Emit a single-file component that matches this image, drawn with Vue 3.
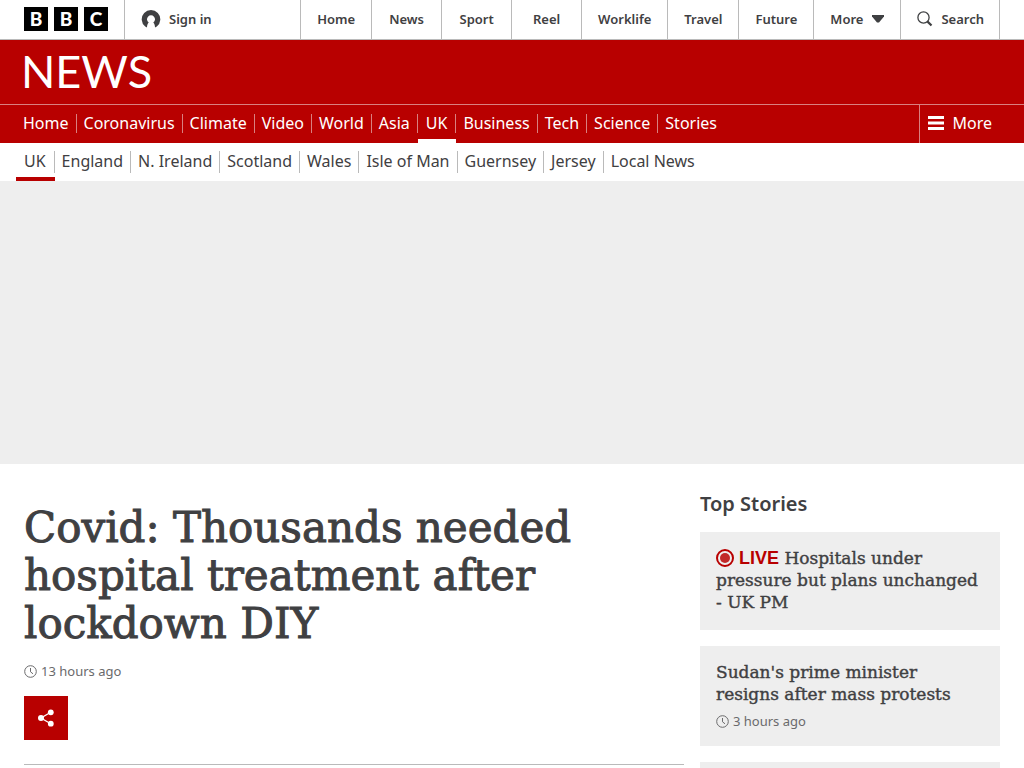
<script setup>
const services = ['Home', 'News', 'Sport', 'Reel', 'Worklife', 'Travel', 'Future']
const sections = ['Home', 'Coronavirus', 'Climate', 'Video', 'World', 'Asia', 'UK', 'Business', 'Tech', 'Science', 'Stories']
const regions = ['UK', 'England', 'N. Ireland', 'Scotland', 'Wales', 'Isle of Man', 'Guernsey', 'Jersey', 'Local News']
</script>

<template>
  <div class="page">
    <header>
      <div class="topbar">
        <a class="blocks" href="#" aria-label="BBC"><span>B</span><span>B</span><span>C</span></a>
        <a class="signin" href="#">
          <svg width="20" height="20" viewBox="0 0 20 20" aria-hidden="true">
            <path fill="#3f4042" d="M4.200 17.600 A9.300 9.300 0 1 1 15.800 17.600 L14 18.600 C14 16.500 13.500 15 12.300 13.600 A4 4 0 1 0 7.700 13.600 C6.500 15 6 16.500 6 18.600Z" />
          </svg>
          <span>Sign in</span>
        </a>
        <nav class="services" aria-label="BBC">
          <a v-for="name in services" :key="name" href="#">{{ name }}</a>
          <button type="button" class="more">
            More
            <svg width="12" height="8" viewBox="0 0 12 8" aria-hidden="true"><path fill="#3f4042" d="M0 0H12V1.500L7 7.500H5L0 1.500Z" /></svg>
          </button>
          <a class="search" href="#">
            <svg width="16" height="16" viewBox="0 0 16 16" fill="none" stroke="#3f4042" aria-hidden="true">
              <circle cx="6.500" cy="6.500" r="5.600" stroke-width="1.300" /><path d="M10.600 10.600L14.500 14.500" stroke-width="2.200" />
            </svg>
            Search
          </a>
        </nav>
      </div>
      <div class="brand"><a href="#">NEWS</a></div>
      <div class="sections">
        <nav class="tabs" aria-label="News">
          <a v-for="name in sections" :key="name" href="#" :class="{ current: name === 'UK' }"><span>{{ name }}</span></a>
        </nav>
        <button type="button" class="menu">
          <svg width="16" height="14" viewBox="0 0 16 14" aria-hidden="true"><path fill="#fff" d="M0 0H16V3H0ZM0 5.500H16V8.500H0ZM0 11H16V14H0Z" /></svg>
          More
        </button>
      </div>
      <nav class="tabs regions" aria-label="UK">
        <a v-for="name in regions" :key="name" href="#" :class="{ current: name === 'UK' }"><span>{{ name }}</span></a>
      </nav>
    </header>
    <div class="banner"></div>
    <main>
      <article>
        <h1>Covid: Thousands needed hospital treatment after lockdown DIY</h1>
        <p class="time">
          <svg width="13" height="13" viewBox="0 0 13 13" fill="none" stroke="#6a6a6c" aria-hidden="true"><circle cx="6.500" cy="6.500" r="5.800" /><path d="M6.500 3V6.800L9 8.800" /></svg>
          13 hours ago
        </p>
        <button type="button" class="share" aria-label="Share">
          <svg width="16" height="18" viewBox="0 0 16 18" aria-hidden="true">
            <path d="M12.700 3.300L3 9L12.700 14.700" fill="none" stroke="#fff" stroke-width="1.300" />
            <g fill="#fff"><circle cx="12.800" cy="3.300" r="2.900" /><circle cx="3" cy="9" r="3" /><circle cx="12.800" cy="14.700" r="2.900" /></g>
          </svg>
        </button>
      </article>
      <aside>
        <h2>Top Stories</h2>
        <a class="card" href="#">
          <h3>
            <svg class="pulse" width="18" height="18" viewBox="0 0 18 18" aria-hidden="true"><circle cx="9" cy="9" r="8" fill="none" stroke="#b80000" stroke-width="2" /><circle cx="9" cy="9" r="5" fill="#c22a2a" /></svg>
            <span class="live">LIVE</span> Hospitals under pressure but plans unchanged - UK PM
          </h3>
        </a>
        <a class="card" href="#">
          <h3>Sudan's prime minister resigns after mass protests</h3>
          <p class="time">
            <svg width="13" height="13" viewBox="0 0 13 13" fill="none" stroke="#6a6a6c" aria-hidden="true"><circle cx="6.500" cy="6.500" r="5.800" /><path d="M6.500 3V6.800L9 8.800" /></svg>
            3 hours ago
          </p>
        </a>
        <div class="card"></div>
      </aside>
    </main>
  </div>
</template>

<style>
body { margin: 0; background: #fff; }
</style>

<style scoped>
.page { height: 100vh; overflow: hidden; color: #3f4042; font-family: "Noto Sans", sans-serif; }
.page * { box-sizing: border-box; }
a { color: inherit; text-decoration: none; }
button { border: 0; background: none; color: inherit; font: inherit; padding: 0; margin: 0; }
h1, h2, h3, p { margin: 0; }
svg { flex: none; }
.topbar { display: flex; height: 40px; padding: 0 24px; border-bottom: 1px solid #bababa; font-size: 13px; line-height: 16px; font-weight: 600; }
.blocks { display: flex; gap: 6px; padding: 7px 16px 0 0; border-right: 1px solid #bababa; }
.blocks span { width: 24px; height: 24px; background: #000; color: #fff; text-align: center; font: 900 19px/24px Lato, sans-serif; }
.signin { flex: 1; display: flex; align-items: center; gap: 8px; padding: 0 0 1px 16px; }
.services { display: flex; border-left: 1px solid #bababa; }
.services > * { display: flex; align-items: center; justify-content: center; min-width: 70px; padding: 0 16px 1px; border-right: 1px solid #bababa; }
.services .more { gap: 9px; }
.services .search { gap: 8px; }
.services .search { padding-right: 15px; }
.brand { height: 64px; padding-left: 21px; background: #b80000; color: #fff; font: 400 45px/62px Lato, sans-serif; }
.sections { display: flex; justify-content: space-between; height: 39px; padding: 0 24px 0 16px; background: #b80000; color: #fff; border-top: 1px solid #d98080; font-size: 16px; }
.tabs { display: flex; font-size: 16px; line-height: 18px; }
.tabs a { height: 38px; padding-top: 9px; }
.tabs span { display: block; padding: 0 7px 1px; border-right: 1px solid #d98080; }
.tabs a:last-child span { border-right: 0; }
.tabs .current { border-bottom: 4px solid #fff; }
.tabs .current span { padding: 0 8px 1px; }
.tabs.regions { padding-left: 16px; }
.regions a { padding-top: 8px; }
.regions span { border-color: #bababa; line-height: 21px; }
.regions .current { border-color: #b80000; }
.menu { display: flex; align-items: center; gap: 8px; padding: 0 8px 2px; border-left: 1px solid #d98080; }
.banner { height: 283px; background: #eee; }
main { display: grid; grid-template-columns: minmax(0, 1fr) 300px; gap: 16px; padding: 0 24px; }
article { align-self: start; padding: 40px 0 24px; border-bottom: 1px solid #bababa; }
h1 { max-width: 600px; font: 400 42px/48px "DejaVu Serif", serif; -webkit-text-stroke: 1px #3f4042; }
.time { display: flex; align-items: center; gap: 4px; color: #6a6a6c; font-size: 13px; line-height: 16px; }
article .time { margin: 15px 0 17px; }
.share { display: flex; align-items: center; justify-content: center; width: 44px; height: 44px; background: #b80000; }
aside { display: flex; flex-direction: column; gap: 16px; padding-top: 28px; }
h2 { font-size: 20px; line-height: 24px; font-weight: 600; }
.card { display: block; min-height: 98px; padding: 15px 16px 17px; background: #eee; }
h3 { font: 400 17px/22px "DejaVu Serif", serif; -webkit-text-stroke: 0.4px currentColor; }
.live { color: #b80000; font: 700 18px/18px "Liberation Sans", sans-serif; -webkit-text-stroke: 0; }
.pulse { margin-right: 5px; vertical-align: -3px; }
.card .time { margin-top: 8px; }
</style>
